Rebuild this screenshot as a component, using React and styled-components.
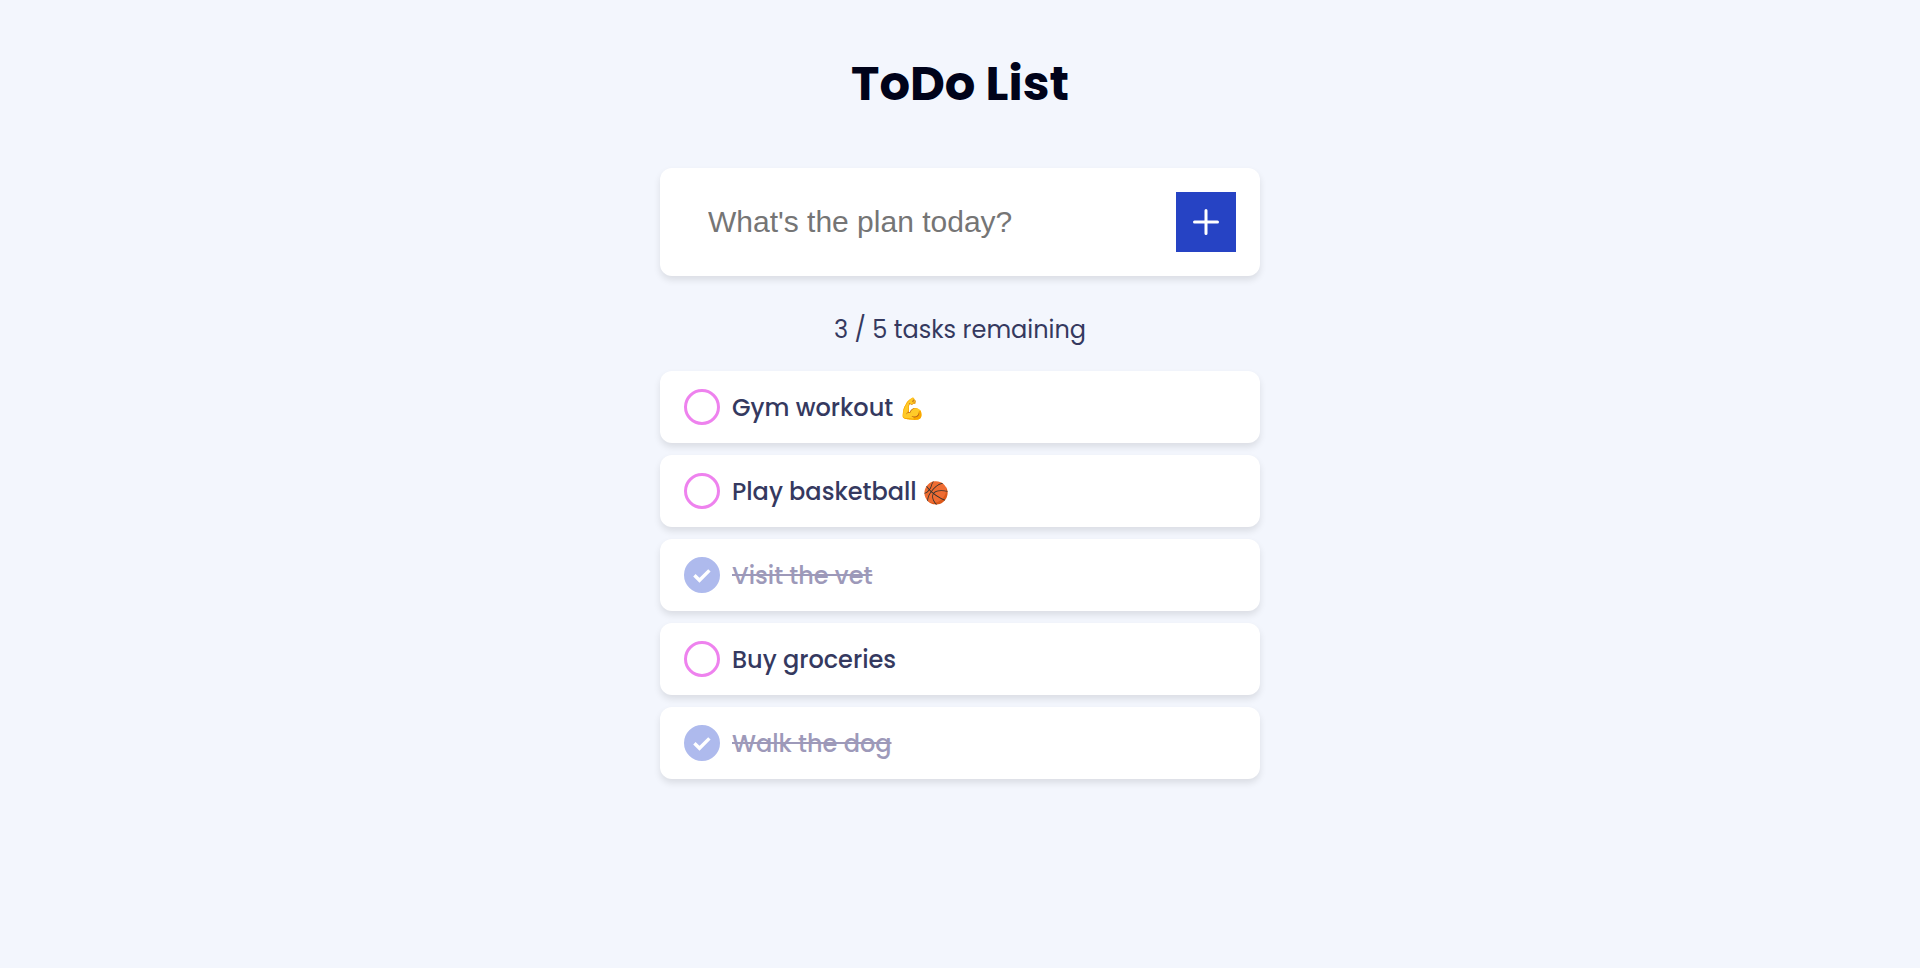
import React, { useState } from "react";
import styled, { createGlobalStyle } from "styled-components";

const GlobalStyle = createGlobalStyle`
  *, *::before, *::after { box-sizing: border-box; }
  body {
    margin: 0;
    background: #f3f6fd;
    color: #35395f;
    font-family: Poppins, Inter, "Liberation Sans", sans-serif;
    font-size: 24px;
    line-height: 36px;
  }
`;

const Page = styled.main`
  display: flex;
  flex-direction: column;
  width: 100%;
  max-width: 648px;
  margin: 0 auto;
  padding: 48px 24px;
`;

const Title = styled.h1`
  margin: 0 0 48px;
  color: #00031a;
  font-size: 48px;
  font-weight: 700;
  line-height: 72px;
  text-align: center;
`;

const Card = styled.div`
  display: flex;
  align-items: center;
  background: #fff;
  border-radius: 12px;
  box-shadow: 0 4px 7px rgba(0, 0, 0, 0.1);
`;

const AddForm = styled(Card).attrs({ as: "form" })`
  padding: 24px;
`;

const TaskInput = styled.input`
  flex: 1;
  min-width: 0;
  height: 60px;
  padding: 0 24px;
  border: 0;
  outline: 0;
  background: transparent;
  color: #35395f;
  font-family: Arial, "Liberation Sans", sans-serif;
  font-size: 30px;

  &::placeholder {
    color: #757575;
    opacity: 1;
  }
`;

const AddButton = styled.button`
  display: grid;
  place-items: center;
  width: 60px;
  height: 60px;
  padding: 0;
  border: 0;
  background: #2643c4;
  color: #fff;
  cursor: pointer;
`;

const Summary = styled.p`
  margin: 36px 0 23px;
  text-align: center;
`;

const TaskList = styled.ul`
  display: flex;
  flex-direction: column;
  gap: 12px;
  margin: 0;
  padding: 0;
  list-style: none;
`;

const TaskCard = styled(Card).attrs({ as: "li" })`
  height: 72px;
  padding: 0 24px;
`;

const TaskLabel = styled.label`
  display: flex;
  flex: 1;
  align-items: center;
  gap: 12px;
  cursor: pointer;
`;

const Tick = styled.span`
  display: grid;
  flex: none;
  place-items: center;
  width: 36px;
  height: 36px;

  > * {
    grid-area: 1 / 1;
  }
`;

const TickBox = styled.input`
  appearance: none;
  width: 36px;
  height: 36px;
  margin: 0;
  border: 3px solid #ee82ee;
  border-radius: 50%;
  cursor: pointer;

  &:checked {
    border-color: #aebaed;
    background: #aebaed;
  }
`;

const TaskText = styled.span`
  padding-top: 2px;
  color: ${({ $done }) => ($done ? "#9d99b9" : "#35395f")};
  font-weight: 500;
  text-decoration: ${({ $done }) => ($done ? "line-through" : "none")};
`;

const Emoji = styled.span`
  font-size: 21px;
  line-height: 24px;
`;

const PlusIcon = () => (
  <svg width="36" height="36" viewBox="0 0 36 36" fill="none" stroke="currentColor" strokeWidth="3" strokeLinecap="round" aria-hidden="true">
    <path d="M18 6.5v23M6.5 18h23" />
  </svg>
);

const CheckMark = styled.svg`
  pointer-events: none;
`;

const initialTasks = [
  { id: 1, name: "Gym workout", emoji: "💪", done: false },
  { id: 2, name: "Play basketball", emoji: "🏀", done: false },
  { id: 3, name: "Visit the vet", done: true },
  { id: 4, name: "Buy groceries", done: false },
  { id: 5, name: "Walk the dog", done: true },
];

function Task({ task, onToggle }) {
  return (
    <TaskCard>
      <TaskLabel>
        <Tick>
          <TickBox type="checkbox" checked={task.done} onChange={() => onToggle(task.id)} />
          {task.done && (
            <CheckMark width="36" height="36" viewBox="0 0 36 36" fill="none" stroke="#fff" strokeWidth="3.4" aria-hidden="true">
              <path d="M10.4 18.2l5.1 5.1 9.9-9.9" />
            </CheckMark>
          )}
        </Tick>
        <TaskText $done={task.done}>
          {task.name}
          {task.emoji && <> <Emoji>{task.emoji}</Emoji></>}
        </TaskText>
      </TaskLabel>
    </TaskCard>
  );
}

export default function App() {
  const [tasks, setTasks] = useState(initialTasks);
  const [draft, setDraft] = useState("");
  const remaining = tasks.filter((task) => !task.done).length;

  const toggle = (id) =>
    setTasks(tasks.map((task) => (task.id === id ? { ...task, done: !task.done } : task)));

  const add = (event) => {
    event.preventDefault();
    if (!draft.trim()) return;
    setTasks([{ id: Date.now(), name: draft.trim(), done: false }, ...tasks]);
    setDraft("");
  };

  return (
    <>
      <GlobalStyle />
      <Page>
        <Title>ToDo List</Title>
        <AddForm onSubmit={add}>
          <TaskInput
            type="text"
            aria-label="New task"
            placeholder="What's the plan today?"
            value={draft}
            onChange={(event) => setDraft(event.target.value)}
          />
          <AddButton type="submit" aria-label="Add task">
            <PlusIcon />
          </AddButton>
        </AddForm>
        <Summary>{`${remaining} / ${tasks.length} tasks remaining`}</Summary>
        <TaskList>
          {tasks.map((task) => (
            <Task key={task.id} task={task} onToggle={toggle} />
          ))}
        </TaskList>
      </Page>
    </>
  );
}
